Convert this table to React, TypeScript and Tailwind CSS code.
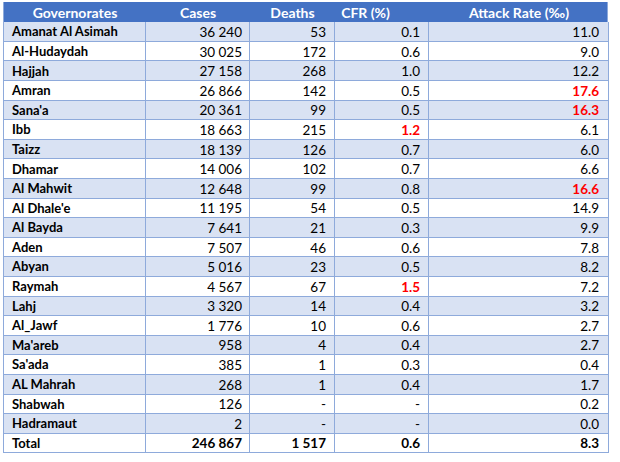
const rows: [string, string, string, string, string, boolean?, boolean?][] = [
  ['Amanat Al Asimah', '36 240', '53', '0.1', '11.0'],
  ['Al-Hudaydah', '30 025', '172', '0.6', '9.0'],
  ['Hajjah', '27 158', '268', '1.0', '12.2'],
  ['Amran', '26 866', '142', '0.5', '17.6', false, true],
  ["Sana'a", '20 361', '99', '0.5', '16.3', false, true],
  ['Ibb', '18 663', '215', '1.2', '6.1', true],
  ['Taizz', '18 139', '126', '0.7', '6.0'],
  ['Dhamar', '14 006', '102', '0.7', '6.6'],
  ['Al Mahwit', '12 648', '99', '0.8', '16.6', false, true],
  ["Al Dhale'e", '11 195', '54', '0.5', '14.9'],
  ['Al Bayda', '7 641', '21', '0.3', '9.9'],
  ['Aden', '7 507', '46', '0.6', '7.8'],
  ['Abyan', '5 016', '23', '0.5', '8.2'],
  ['Raymah', '4 567', '67', '1.5', '7.2', true],
  ['Lahj', '3 320', '14', '0.4', '3.2'],
  ['Al_Jawf', '1 776', '10', '0.6', '2.7'],
  ["Ma'areb", '958', '4', '0.4', '2.7'],
  ["Sa'ada", '385', '1', '0.3', '0.4'],
  ['AL Mahrah', '268', '1', '0.4', '1.7'],
  ['Shabwah', '126', '-', '-', '0.2'],
  ['Hadramaut', '2', '-', '-', '0.0'],
];

const grid = 'grid grid-cols-[142px_104px_85px_94px_180px]';
const cell = 'flex items-center pt-px border-r border-b border-[#8eaadb] h-[19.6px]';

export default function App() {
  return (
    <div className="w-[620px] h-[462px] bg-white pt-[2px] pl-[3px] font-['Lato',sans-serif] text-[13.5px] text-black">
      <div className="w-[605px] border-l border-[#8eaadb]">
        <div className={`${grid} bg-[#4472c4] text-white font-bold text-[14px] h-[20.3px] items-center border-r border-[#8eaadb]`}>
          <div className="text-center">Governorates</div>
          <div className="text-center">Cases</div>
          <div className="text-center">Deaths</div>
          <div className="text-center pr-[33px]">CFR (%)</div>
          <div className="text-center">Attack Rate (‰)</div>
        </div>
        {rows.map(([name, cases, deaths, cfr, rate, redCfr, redRate], i) => (
          <div key={name} className={`${grid} ${i % 2 === 0 ? 'bg-[#d9e2f3]' : 'bg-white'}`}>
            <div className={`${cell} pl-[8px] font-bold text-[13px]`}>{name}</div>
            <div className={`${cell} justify-end pr-[7px]`}>{cases}</div>
            <div className={`${cell} justify-end pr-[8px]`}>{deaths}</div>
            <div className={`${cell} justify-end pr-[8px] ${redCfr ? 'text-[#ff0000] font-bold' : ''}`}>{cfr}</div>
            <div className={`${cell} justify-end pr-[9px] ${redRate ? 'text-[#ff0000] font-bold' : ''}`}>{rate}</div>
          </div>
        ))}
        <div className={`${grid} bg-white font-bold`}>
          <div className={`${cell} pl-[8px] text-[13px]`}>Total</div>
          <div className={`${cell} justify-end pr-[7px]`}>246 867</div>
          <div className={`${cell} justify-end pr-[8px]`}>1 517</div>
          <div className={`${cell} justify-end pr-[8px]`}>0.6</div>
          <div className={`${cell} justify-end pr-[9px]`}>8.3</div>
        </div>
      </div>
    </div>
  );
}
